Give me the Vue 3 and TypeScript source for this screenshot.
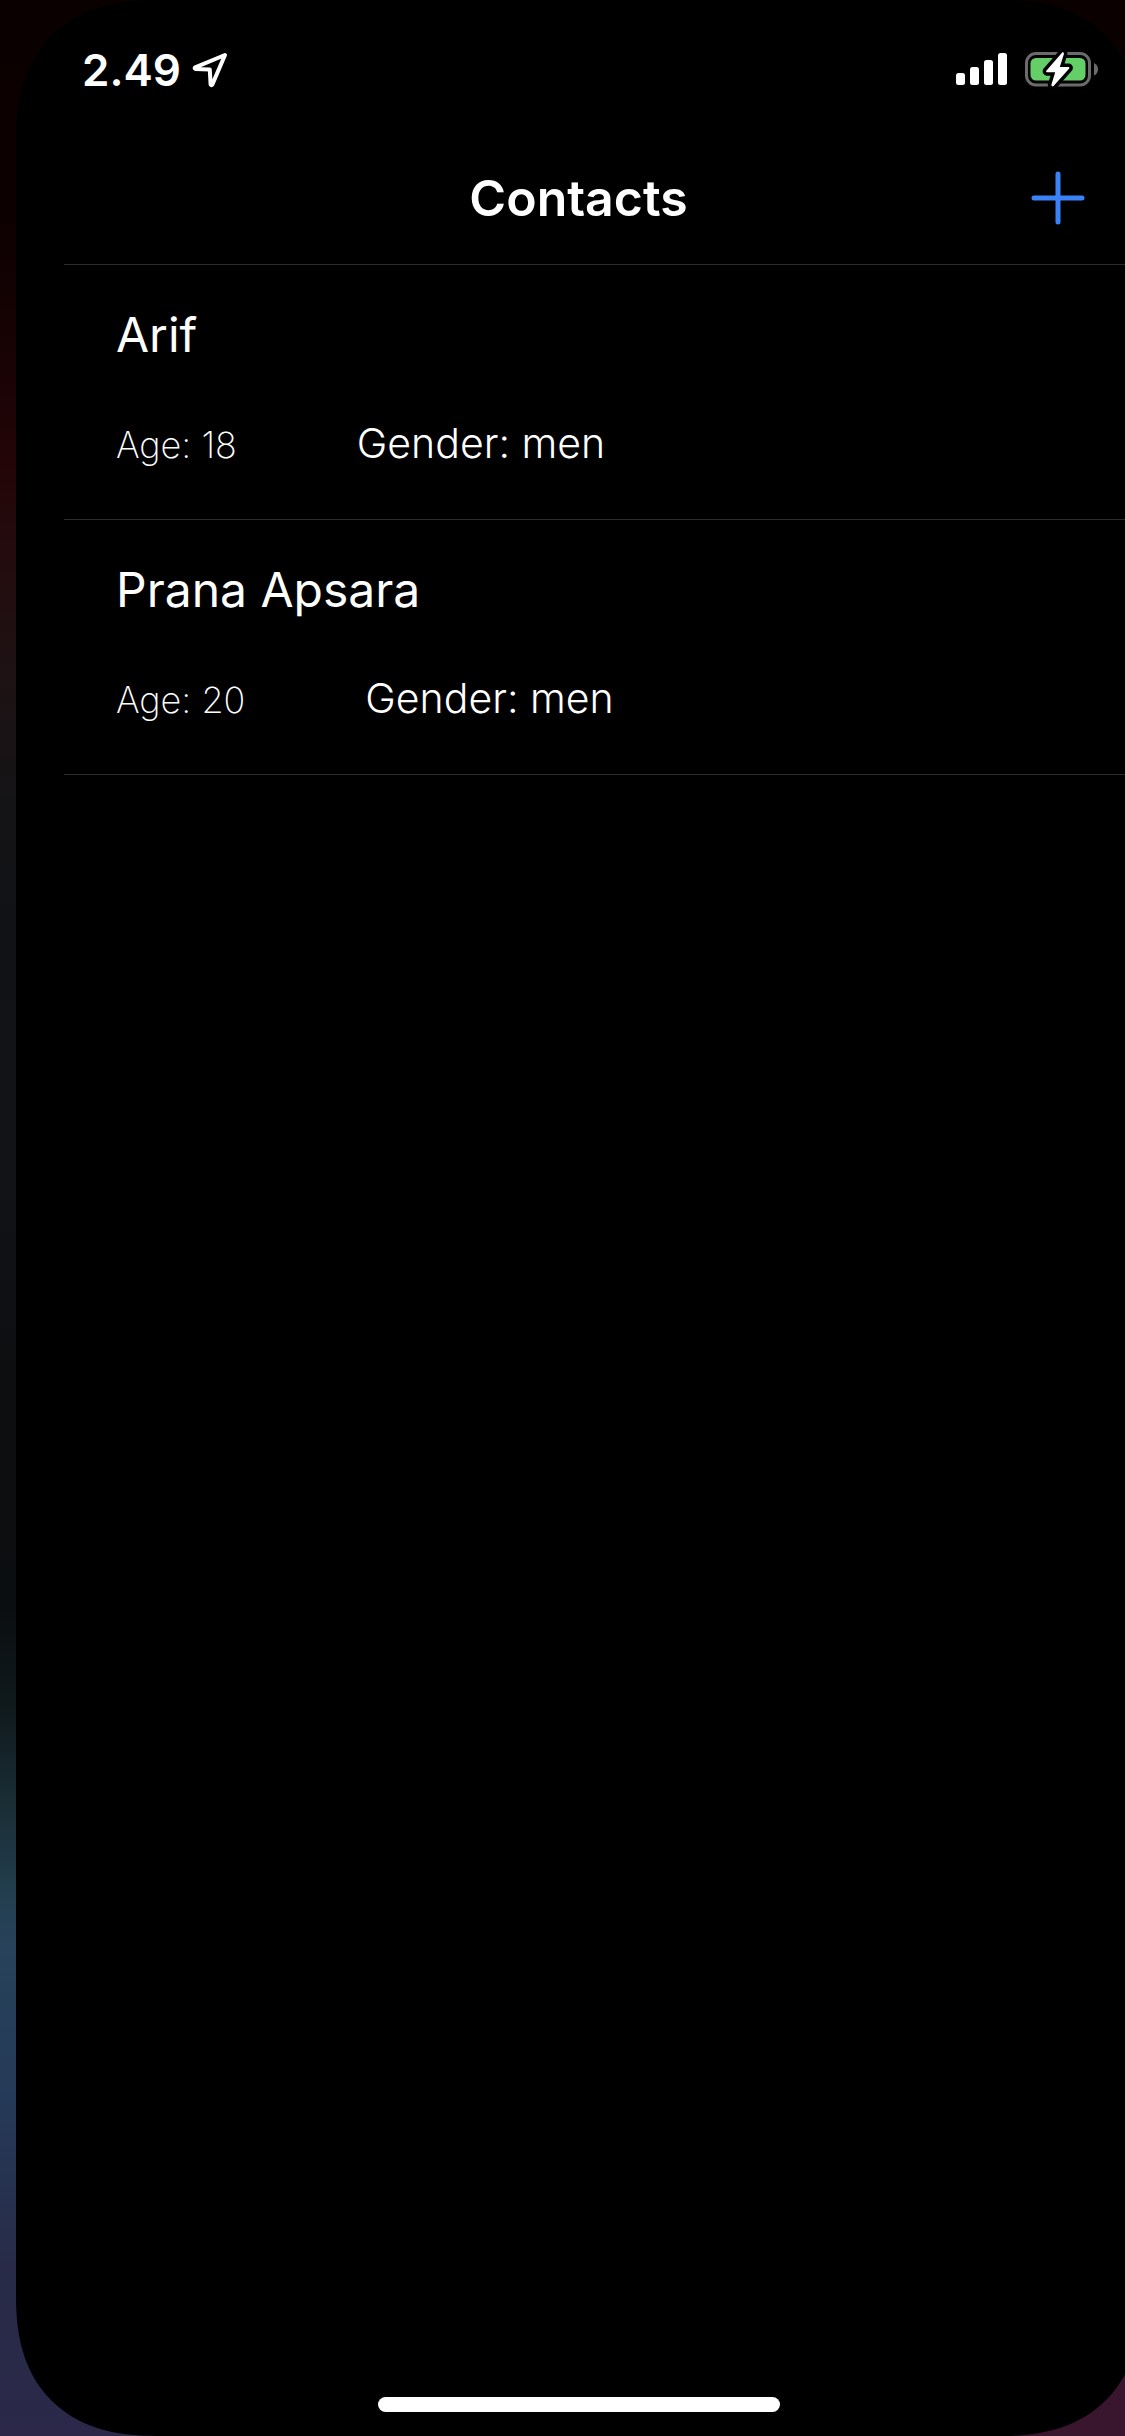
<script setup lang="ts">
import { ref } from 'vue'

interface Contact {
  id: number
  name: string
  age: number
  gender: string
}

const contacts = ref<Contact[]>([
  { id: 1, name: 'Arif', age: 18, gender: 'men' },
  { id: 2, name: 'Prana Apsara', age: 20, gender: 'men' },
])
</script>

<template>
  <div class="backdrop">
    <div class="screen">
      <div class="status">
        <div class="status-left">
          <span class="clock">2.49</span>
          <svg class="location" width="36" height="36" viewBox="0 0 36 36" aria-hidden="true">
            <path
              d="M33 3 L3.2 15.4 Q2 16.4 3.4 17 L17.8 17.6 L18.6 32.4 Q19.4 34 20.4 32.4 Z"
              fill="none"
              stroke="#fff"
              stroke-width="4"
              stroke-linejoin="round"
            />
          </svg>
        </div>
        <div class="status-right">
          <svg width="52" height="36" viewBox="0 0 52 36" fill="#fff" aria-hidden="true">
            <rect x="0" y="21" width="9" height="12" rx="2.5" />
            <rect x="14" y="15" width="9" height="18" rx="2.5" />
            <rect x="28" y="8" width="9" height="25" rx="2.5" />
            <rect x="42" y="1" width="9" height="32" rx="2.5" />
          </svg>
          <svg width="74" height="36" viewBox="0 0 74 36" aria-hidden="true">
            <rect x="1.5" y="1.5" width="63" height="31.5" rx="9.5" fill="none" stroke="#6b6b6b" stroke-width="3" />
            <path d="M69 11 Q73 13 73 17.2 Q73 21.5 69 23.5 Z" fill="#6b6b6b" />
            <rect x="5.5" y="6" width="55" height="22.5" rx="5.5" fill="#65cf67" />
            <path
              d="M37.4 0.3 L21.3 18.8 Q20.8 20 22 20.2 L30.2 20.2 L26.3 33 Q27 35.2 28.6 34 L44.2 16.4 Q44.8 15.2 43.6 14.9 L34.8 14.9 L39 1.8 Q38.9 -0.2 37.4 0.3 Z"
              fill="#fff"
              stroke="#000"
              stroke-width="7"
              stroke-linejoin="round"
              paint-order="stroke"
            />
          </svg>
        </div>
      </div>

      <header class="navbar">
        <h1>Contacts</h1>
        <button type="button" class="add" aria-label="Add contact">
          <svg width="54" height="54" viewBox="0 0 54 54" aria-hidden="true">
            <path d="M27 3 V51 M3 27 H51" stroke="#3a82f7" stroke-width="5" stroke-linecap="round" />
          </svg>
        </button>
      </header>

      <ul class="list">
        <li v-for="contact in contacts" :key="contact.id" class="row">
          <h2>{{ contact.name }}</h2>
          <div class="details">
            <span class="age">Age: {{ contact.age }}</span>
            <span class="gender">Gender: {{ contact.gender }}</span>
          </div>
        </li>
      </ul>

      <div class="home"></div>
    </div>
  </div>
</template>

<style>
body {
  margin: 0;
  background: #000;
}
</style>

<style scoped>
.backdrop {
  display: flex;
  min-height: 100vh;
  box-sizing: border-box;
  padding-left: 16px;
  overflow: hidden;
  color: #fff;
  font-family: Inter, "Liberation Sans", sans-serif;
  background:
    linear-gradient(#0b0000 50%, #3a152e 95%) right / 50% 100% no-repeat,
    linear-gradient(
      #0b0000 0%,
      #0c0000 8%,
      #150203 13%,
      #230507 19%,
      #240c0e 23%,
      #1d1214 28%,
      #141416 33%,
      #111216 38%,
      #121317 48%,
      #0d0e10 57%,
      #0b0e10 66%,
      #0f191c 70%,
      #1a2d35 74%,
      #233f50 78%,
      #27425a 80%,
      #253a58 86%,
      #272b48 93%,
      #2b2849 100%
    );
}

.screen {
  display: flex;
  flex: none;
  flex-direction: column;
  box-sizing: border-box;
  width: calc(100% + 16px);
  border-radius: 118px;
  background: #000;
}

/* Continuous corner curve where the browser can draw one */
@supports (corner-shape: superellipse(1.25)) {
  .screen {
    border-radius: 140px;
    corner-shape: superellipse(1.25);
  }
}

.status {
  display: flex;
  align-items: center;
  justify-content: space-between;
  height: 140px;
  box-sizing: border-box;
  padding: 0 42px 0 66px;
}

.status-left {
  display: flex;
  align-items: center;
  gap: 11px;
}

.status-right {
  display: flex;
  align-items: center;
  gap: 17px;
}

.clock {
  font-size: 44px;
  font-weight: 600;
  line-height: 56px;
}

.navbar {
  display: grid;
  grid-template-columns: 1fr auto 1fr;
  align-items: center;
  height: 124px;
  box-sizing: border-box;
  padding: 0 56px 8px;
}

h1 {
  grid-column: 2;
  margin: 0;
  font-size: 50px;
  font-weight: 600;
  line-height: 64px;
}

.add {
  display: flex;
  justify-self: end;
  padding: 0;
  border: 0;
  background: none;
  cursor: pointer;
}

.list {
  margin: 0 0 0 48px;
  padding: 0;
  border-top: 1px solid #2c2c2e;
  list-style: none;
}

.row {
  height: 255px;
  box-sizing: border-box;
  padding: 38px 52px 0;
  border-bottom: 1px solid #2c2c2e;
}

h2 {
  margin: 0;
  font-size: 48px;
  font-weight: 400;
  line-height: 64px;
}

.details {
  display: flex;
  align-items: baseline;
  gap: 120px;
  margin-top: 48px;
  line-height: 56px;
}

.age {
  font-size: 36px;
  font-weight: 150;
}

.gender {
  font-size: 41px;
  font-weight: 300;
}

.home {
  align-self: center;
  width: 36%;
  max-width: 402px;
  height: 15px;
  margin: auto 0 24px;
  border-radius: 8px;
  background: #fff;
}
</style>
